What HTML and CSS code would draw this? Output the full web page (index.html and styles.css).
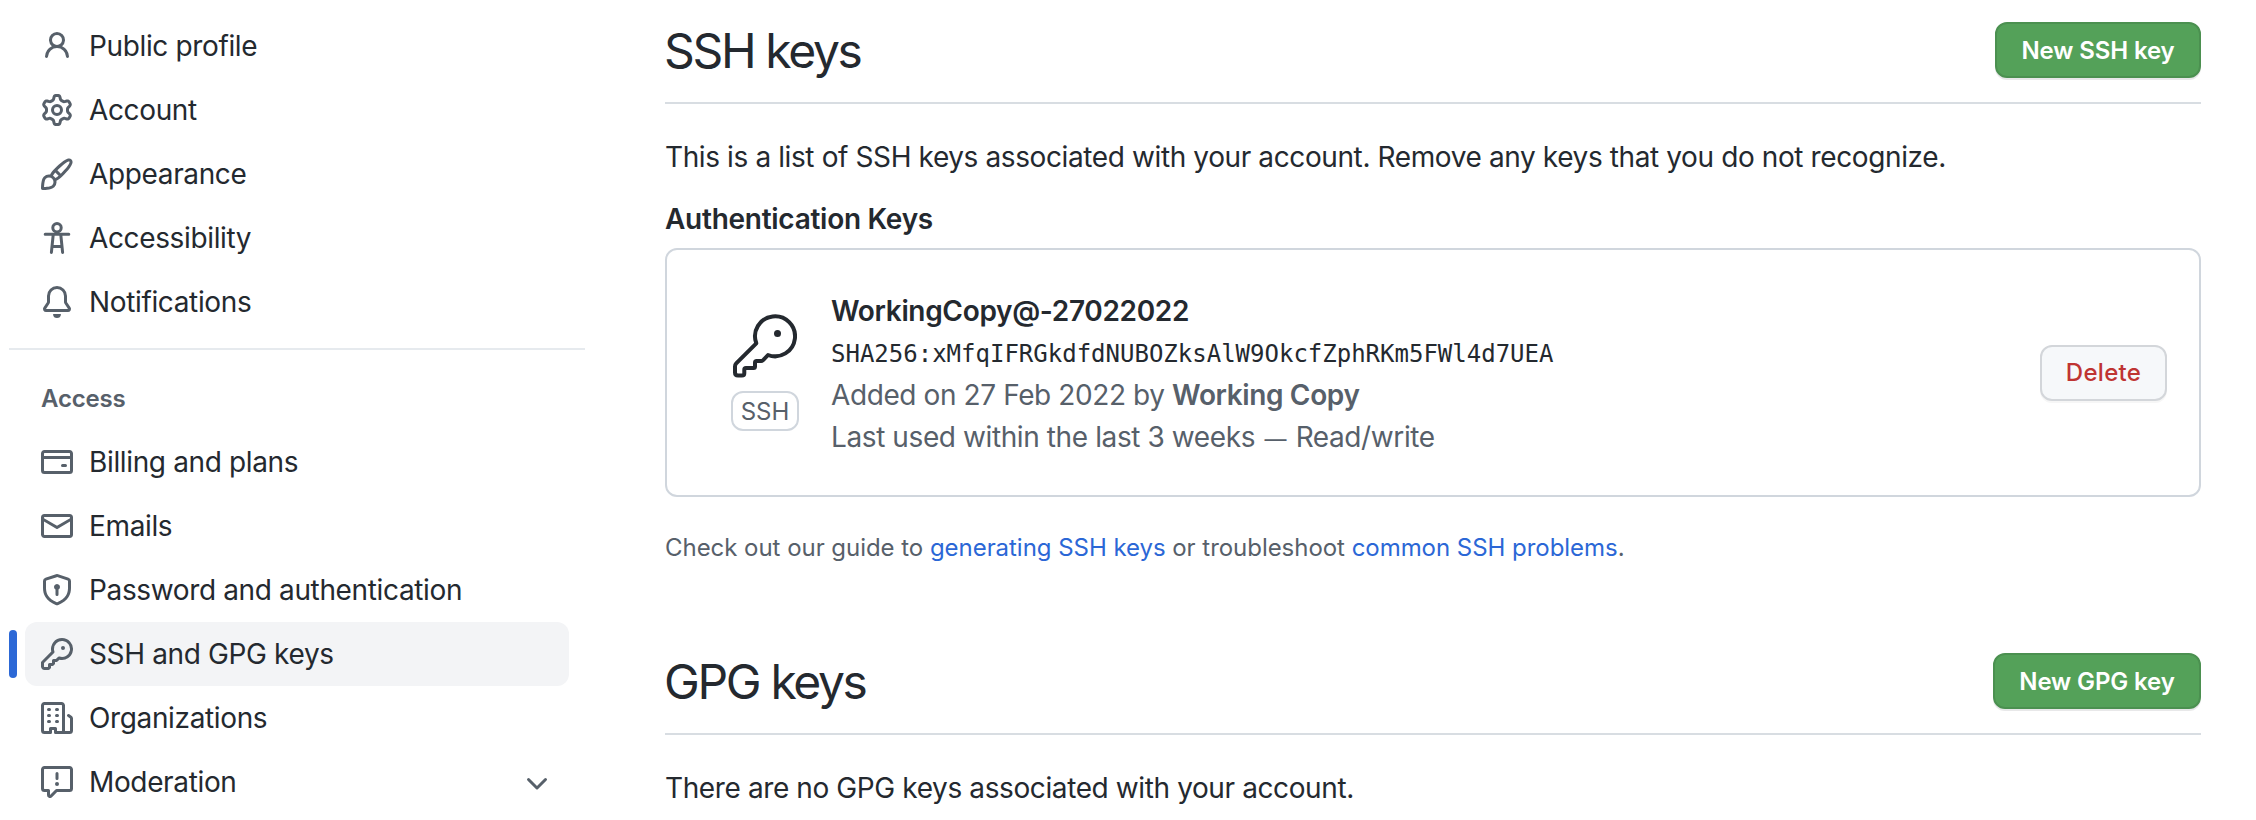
FILE: index.html
```html
<!DOCTYPE html>
<html lang="en">
<head>
<meta charset="utf-8">
<title>SSH and GPG keys</title>
<link rel="stylesheet" href="styles.css">
</head>
<body>
<div class="page">
  <nav class="sidebar">
    <ul class="nav-list">
      <li class="nav-item"><svg class="icon" viewBox="0 0 16 16"><path d="M10.5 5a2.5 2.5 0 11-5 0 2.5 2.5 0 015 0zm.061 3.073a4 4 0 10-5.123 0 6.004 6.004 0 00-3.431 5.142.75.75 0 001.498.07 4.5 4.5 0 018.99 0 .75.75 0 101.498-.07 6.005 6.005 0 00-3.432-5.142z"/></svg><span class="label">Public profile</span></li>
      <li class="nav-item"><svg class="icon" viewBox="0 0 16 16"><path fill-rule="evenodd" d="M7.429 1.525a6.593 6.593 0 011.142 0c.036.003.108.036.137.146l.289 1.105c.147.56.55.967.997 1.189.174.086.341.183.501.29.417.278.97.423 1.53.27l1.102-.303c.11-.03.175.016.195.046.219.31.41.641.573.989.014.031.022.11-.059.19l-.815.806c-.411.406-.562.957-.53 1.456a4.588 4.588 0 010 .582c-.032.499.119 1.05.53 1.456l.815.806c.08.08.073.159.059.19a6.494 6.494 0 01-.573.99c-.02.029-.086.074-.195.045l-1.103-.303c-.559-.153-1.112-.008-1.529.27-.16.107-.327.204-.5.29-.449.222-.851.628-.998 1.189l-.289 1.105c-.029.11-.101.143-.137.146a6.613 6.613 0 01-1.142 0c-.036-.003-.108-.037-.137-.146l-.289-1.105c-.147-.56-.55-.967-.997-1.189a4.502 4.502 0 01-.501-.29c-.417-.278-.97-.423-1.53-.27l-1.102.303c-.11.03-.175-.016-.195-.046a6.492 6.492 0 01-.573-.989c-.014-.031-.022-.11.059-.19l.815-.806c.411-.406.562-.957.53-1.456a4.587 4.587 0 010-.582c.032-.499-.119-1.05-.53-1.456l-.815-.806c-.08-.08-.073-.159-.059-.19a6.44 6.44 0 01.573-.99c.02-.029.086-.075.195-.045l1.103.303c.559.153 1.112.008 1.529-.27.16-.107.327-.204.5-.29.449-.222.851-.628.998-1.189l.289-1.105c.029-.11.101-.143.137-.146zM8 0c-.236 0-.47.01-.701.03-.743.065-1.29.615-1.458 1.261l-.29 1.106c-.017.066-.078.158-.211.224a5.994 5.994 0 00-.668.386c-.123.082-.233.09-.3.071L3.27 2.776c-.644-.177-1.392.02-1.82.63a7.977 7.977 0 00-.704 1.217c-.315.675-.111 1.422.363 1.891l.815.806c.05.048.098.147.088.294a6.084 6.084 0 000 .772c.01.147-.038.246-.088.294l-.815.806c-.474.469-.678 1.216-.363 1.891.2.428.436.835.704 1.218.428.609 1.176.806 1.82.63l1.103-.303c.066-.019.176-.011.299.071.213.143.436.272.668.386.133.066.194.158.212.224l.289 1.106c.169.646.715 1.196 1.458 1.26a8.094 8.094 0 001.402 0c.743-.064 1.29-.614 1.458-1.26l.29-1.106c.017-.066.078-.158.211-.224a5.98 5.98 0 00.668-.386c.123-.082.233-.09.3-.071l1.102.302c.644.177 1.392-.02 1.82-.63.268-.382.505-.789.704-1.217.315-.675.111-1.422-.364-1.891l-.814-.806c-.05-.048-.098-.147-.088-.294a6.1 6.1 0 000-.772c-.01-.147.039-.246.088-.294l.814-.806c.475-.469.679-1.216.364-1.891a7.992 7.992 0 00-.704-1.218c-.428-.609-1.176-.806-1.82-.63l-1.103.303c-.066.019-.176.011-.299-.071a5.991 5.991 0 00-.668-.386c-.133-.066-.194-.158-.212-.224L10.16 1.29C9.99.645 9.444.095 8.701.031A8.094 8.094 0 008 0zm1.5 8a1.5 1.5 0 11-3 0 1.5 1.5 0 013 0zM11 8a3 3 0 11-6 0 3 3 0 016 0z"/></svg><span class="label">Account</span></li>
      <li class="nav-item"><svg class="icon" viewBox="0 0 16 16"><path fill-rule="evenodd" d="M11.134 1.535C9.722 2.562 8.16 4.057 6.889 5.312 5.8 6.387 5.041 7.401 4.575 8.294a3.745 3.745 0 00-3.227 1.054c-.43.431-.69 1.066-.86 1.657a11.982 11.982 0 00-.358 1.914A21.263 21.263 0 000 15.203v.054l.75-.007-.007.75h.054a14.404 14.404 0 00.654-.012 21.243 21.243 0 001.63-.118c.62-.07 1.3-.18 1.914-.357.592-.17 1.226-.43 1.657-.861a3.745 3.745 0 001.055-3.217c.908-.461 1.942-1.216 3.04-2.3 1.279-1.262 2.764-2.825 3.775-4.249.501-.706.923-1.428 1.125-2.096.2-.659.235-1.469-.368-2.07-.606-.607-1.42-.55-2.069-.34-.66.213-1.376.646-2.076 1.155zm-3.95 8.48a3.76 3.76 0 00-1.19-1.192 9.758 9.758 0 011.161-1.607l1.658 1.658a9.853 9.853 0 01-1.63 1.142zM.742 16l.007-.75-.75.008A.75.75 0 00.743 16zM12.016 2.749c-1.224.89-2.605 2.189-3.822 3.384l1.718 1.718c1.21-1.205 2.51-2.597 3.387-3.833.47-.662.78-1.227.912-1.662.134-.444.032-.551.009-.575h-.001V1.78c-.014-.014-.112-.113-.548.027-.432.14-.995.462-1.655.942zM1.62 13.089a19.56 19.56 0 00-.104 1.395 19.55 19.55 0 001.396-.104 10.528 10.528 0 001.668-.309c.526-.151.856-.325 1.011-.48a2.25 2.25 0 00-3.182-3.182c-.155.155-.329.485-.48 1.01a10.515 10.515 0 00-.309 1.67z"/></svg><span class="label">Appearance</span></li>
      <li class="nav-item"><svg class="icon" viewBox="0 0 16 16"><g class="line"><circle cx="8" cy="2.85" r="2.1"/><path d="M2.1 6.1h11.8M6.1 6.4L5.2 15.2M9.9 6.4l.9 8.8M5.6 12.3h4.8"/></g></svg><span class="label">Accessibility</span></li>
      <li class="nav-item"><svg class="icon" viewBox="0 0 16 16"><path d="M8 16a2 2 0 001.985-1.75c.017-.137-.097-.25-.235-.25h-3.5c-.138 0-.252.113-.235.25A2 2 0 008 16z"/><path fill-rule="evenodd" d="M8 1.5A3.5 3.5 0 004.5 5v2.947c0 .346-.102.683-.294.97l-1.703 2.556a.018.018 0 00-.003.01l.001.006c0 .002.002.004.004.006a.017.017 0 00.006.004l.007.001h10.964l.007-.001a.016.016 0 00.006-.004.016.016 0 00.004-.006l.001-.007a.017.017 0 00-.003-.01l-1.703-2.554a1.75 1.75 0 01-.294-.97V5A3.5 3.5 0 008 1.5zM3 5a5 5 0 0110 0v2.947c0 .05.015.098.042.139l1.703 2.555A1.518 1.518 0 0113.482 13H2.518a1.518 1.518 0 01-1.263-2.36l1.703-2.554A.25.25 0 003 7.947V5z"/></svg><span class="label">Notifications</span></li>
    </ul>
    <h3 class="nav-heading">Access</h3>
    <ul class="nav-list">
      <li class="nav-item"><svg class="icon" viewBox="0 0 16 16"><path fill-rule="evenodd" d="M10.75 9a.75.75 0 000 1.5h1.5a.75.75 0 000-1.5h-1.5zM0 3.75C0 2.784.784 2 1.75 2h12.5c.966 0 1.75.784 1.75 1.75v8.5A1.75 1.75 0 0114.25 14H1.75A1.75 1.75 0 010 12.25v-8.5zm14.5 0V5h-13V3.75a.25.25 0 01.25-.25h12.5a.25.25 0 01.25.25zm0 2.75h-13v5.75c0 .138.112.25.25.25h12.5a.25.25 0 00.25-.25V6.5z"/></svg><span class="label">Billing and plans</span></li>
      <li class="nav-item"><svg class="icon" viewBox="0 0 16 16"><path fill-rule="evenodd" d="M1.75 2A1.75 1.75 0 000 3.75v.736a.75.75 0 000 .027v7.737C0 13.216.784 14 1.75 14h12.5A1.75 1.75 0 0016 12.25v-8.5A1.75 1.75 0 0014.25 2H1.75zM14.5 4.07v-.32a.25.25 0 00-.25-.25H1.75a.25.25 0 00-.25.25v.32L8 7.88l6.5-3.81zm-13 1.74v6.441c0 .138.112.25.25.25h12.5a.25.25 0 00.25-.25V5.809L8.38 9.397a.75.75 0 01-.76 0L1.5 5.809z"/></svg><span class="label">Emails</span></li>
      <li class="nav-item"><svg class="icon" viewBox="0 0 16 16"><path fill-rule="evenodd" d="M8.533.133a1.75 1.75 0 00-1.066 0l-5.25 1.68A1.75 1.75 0 001 3.48V7c0 1.566.32 3.182 1.303 4.682.983 1.498 2.585 2.813 5.032 3.855a1.7 1.7 0 001.33 0c2.447-1.042 4.049-2.357 5.032-3.855C14.68 10.182 15 8.566 15 7V3.48a1.75 1.75 0 00-1.217-1.667L8.533.133zm-.61 1.429a.25.25 0 01.153 0l5.25 1.68a.25.25 0 01.174.238V7c0 1.358-.275 2.666-1.057 3.86-.784 1.194-2.121 2.34-4.366 3.297a.2.2 0 01-.154 0c-2.245-.956-3.582-2.104-4.366-3.298C2.775 9.666 2.5 8.36 2.5 7V3.48a.25.25 0 01.174-.237l5.25-1.68zM9.5 6.5a1.5 1.5 0 01-.75 1.3v2.45a.75.75 0 01-1.5 0V7.8A1.5 1.5 0 119.5 6.5z"/></svg><span class="label">Password and authentication</span></li>
      <li class="nav-item selected"><svg class="icon" viewBox="0 0 16 16"><path fill-rule="evenodd" d="M6.5 5.5a4 4 0 112.731 3.795.75.75 0 00-.768.18L7.44 10.5H6.25a.75.75 0 00-.75.75v1.19l-.06.06H4.25a.75.75 0 00-.75.75v1.19l-.06.06H1.75a.25.25 0 01-.25-.25v-1.69l5.024-5.023a.75.75 0 00.181-.768A3.995 3.995 0 016.5 5.5zm4-5.5a5.5 5.5 0 00-5.348 6.788L.22 11.72a.75.75 0 00-.22.53v2C0 15.216.784 16 1.75 16h2a.75.75 0 00.53-.22l.5-.5a.75.75 0 00.22-.53V14h.75a.75.75 0 00.53-.22l.5-.5a.75.75 0 00.22-.53V12h.75a.75.75 0 00.53-.22l.932-.932A5.5 5.5 0 1010.5 0zm.5 6a1 1 0 100-2 1 1 0 000 2z"/></svg><span class="label">SSH and GPG keys</span></li>
      <li class="nav-item"><svg class="icon" viewBox="0 0 16 16"><path fill-rule="evenodd" d="M1.5 14.25c0 .138.112.25.25.25H4v-1.25a.75.75 0 01.75-.75h2.5a.75.75 0 01.75.75v1.25h2.25a.25.25 0 00.25-.25V1.75a.25.25 0 00-.25-.25h-8.5a.25.25 0 00-.25.25v12.5zM1.75 16A1.75 1.75 0 010 14.25V1.75C0 .784.784 0 1.75 0h8.5C11.216 0 12 .784 12 1.75v12.5c0 .085-.006.168-.018.25h2.268a.25.25 0 00.25-.25V8.285a.25.25 0 00-.111-.208l-1.055-.703a.75.75 0 11.832-1.248l1.055.703c.487.325.779.871.779 1.456v5.965A1.75 1.75 0 0114.25 16h-3.5a.75.75 0 01-.197-.026c-.099.017-.2.026-.303.026h-3a.75.75 0 01-.75-.75V14h-1v1.25a.75.75 0 01-.75.75h-3zM3 3.75A.75.75 0 013.75 3h.5a.75.75 0 010 1.5h-.5A.75.75 0 013 3.75zM3.75 6a.75.75 0 000 1.5h.5a.75.75 0 000-1.5h-.5zM3 9.75A.75.75 0 013.75 9h.5a.75.75 0 010 1.5h-.5A.75.75 0 013 9.75zM7.75 9a.75.75 0 000 1.5h.5a.75.75 0 000-1.5h-.5zM7 6.75A.75.75 0 017.75 6h.5a.75.75 0 010 1.5h-.5A.75.75 0 017 6.75zM7.75 3a.75.75 0 000 1.5h.5a.75.75 0 000-1.5h-.5z"/></svg><span class="label">Organizations</span></li>
      <li class="nav-item"><svg class="icon" viewBox="0 0 16 16"><path fill-rule="evenodd" d="M0 1.75C0 .784.784 0 1.75 0h12.5C15.216 0 16 .784 16 1.75v9.5A1.75 1.75 0 0114.25 13H8.06l-2.573 2.573A1.457 1.457 0 013 14.543V13H1.75A1.75 1.75 0 010 11.25v-9.5zm1.75-.25a.25.25 0 00-.25.25v9.5c0 .138.112.25.25.25h2a.75.75 0 01.75.75v2.19l2.72-2.72a.75.75 0 01.53-.22h6.5a.25.25 0 00.25-.25v-9.5a.25.25 0 00-.25-.25H1.75zM9 9a1 1 0 11-2 0 1 1 0 012 0zm-.25-5.25a.75.75 0 00-1.5 0v2.5a.75.75 0 001.5 0v-2.5z"/></svg><span class="label">Moderation</span><svg class="icon" viewBox="0 0 16 16"><path fill-rule="evenodd" d="M12.78 6.22a.75.75 0 010 1.06l-4.25 4.25a.75.75 0 01-1.06 0L3.22 7.28a.75.75 0 011.06-1.06L8 9.94l3.72-3.72a.75.75 0 011.06 0z"/></svg></li>
    </ul>
  </nav>
  <main class="content">
    <header class="section-head">
      <h2 class="title">SSH keys</h2>
      <button class="btn btn-primary btn-ssh">New SSH key</button>
    </header>
    <p class="intro">This is a list of SSH keys associated with your account. Remove any keys that you do not recognize.</p>
    <h3 class="subhead">Authentication Keys</h3>
    <div class="key-box">
      <div class="key-type">
        <svg class="key-icon" viewBox="0 0 64 64"><path class="key-outline" d="M23.3 29.3L3.2 49.4Q2 50.6 2 52.5V58.5Q2 61.5 5 61.5H9Q11.3 61.5 11.3 59.2V55.7Q11.3 54 13 54H20.5Q22 54 22 52.5V48.7Q22 47 23.7 47H28.2Q29.4 47 30.3 46L35 41A20 20 0 1 0 23.3 29.3z"/><circle cx="44.5" cy="19.5" r="3.5"/></svg>
        <span class="badge">SSH</span>
      </div>
      <div class="key-info">
        <strong class="key-name">WorkingCopy@-27022022</strong>
        <code class="fingerprint">SHA256:xMfqIFRGkdfdNUBOZksAlW9OkcfZphRKm5FWl4d7UEA</code>
        <span class="meta">Added on 27 Feb 2022 by <strong class="app">Working Copy</strong></span>
        <span class="meta">Last used within the last 3 weeks <span class="dash">—</span> Read/write</span>
      </div>
      <button class="btn btn-danger">Delete</button>
    </div>
    <p class="help">Check out our guide to <a class="link">generating SSH keys</a> or troubleshoot <a class="link">common SSH problems</a>.</p>
    <header class="section-head section-gpg">
      <h2 class="title">GPG keys</h2>
      <button class="btn btn-primary btn-gpg">New GPG key</button>
    </header>
    <p class="intro">There are no GPG keys associated with your account.</p>
  </main>
</div>
</body>
</html>
```
FILE: styles.css
```css
* { box-sizing: border-box; }
body {
  margin: 0;
  background: #fff;
  color: #24292f;
  font: 28px/42px Inter, "Liberation Sans", sans-serif;
  letter-spacing: -0.39px;
}
h2, h3, p, ul { margin: 0; padding: 0; }
.page { display: flex; height: 820px; overflow: hidden; }

.sidebar { width: 576px; margin-left: 9px; padding-top: 14px; flex: none; }
.nav-list { list-style: none; padding: 0 16px; }
.nav-item {
  position: relative;
  display: flex;
  align-items: center;
  gap: 16px;
  height: 64px;
  padding: 0 16px;
  border-radius: 12px;
  letter-spacing: -0.36px;
}
.label { flex: 1; }
.selected { background: #f3f4f6; }
.selected::before {
  content: "";
  position: absolute;
  left: -16px;
  top: 8px;
  width: 8px;
  height: 48px;
  border-radius: 4px;
  background: #2c68d6;
}
.icon { width: 32px; height: 32px; fill: #57606a; flex: none; }
.line { fill: none; stroke: #57606a; stroke-width: 1.5; stroke-linecap: round; }
.nav-heading {
  margin-top: 14px;
  padding: 31px 32px 13px;
  border-top: 2px solid #e6eaee;
  color: #57606a;
  font-size: 24px;
  font-weight: 600;
  line-height: 36px;
  letter-spacing: -0.2px;
}

.content { width: 1536px; margin-left: 80px; padding-top: 22px; flex: none; }
.section-head {
  display: flex;
  align-items: flex-start;
  justify-content: space-between;
  height: 82px;
  border-bottom: 2px solid #d8dde2;
}
.section-gpg { margin-top: 87px; }
.title { font-size: 48px; font-weight: 400; line-height: 57px; letter-spacing: -2.35px; margin-left: -1px; }
.btn {
  height: 56px;
  padding: 1px 0 0;
  border: 2px solid;
  border-radius: 12px;
  font: 600 24px/36px Inter, "Liberation Sans", sans-serif;
  letter-spacing: -0.12px;
}
.btn-primary {
  background: #54a159;
  border-color: #4b9050;
  color: #fff;
  box-shadow: 0 2px 0 rgba(27, 31, 36, .1);
}
.btn-ssh { width: 206px; }
.btn-gpg { width: 208px; }
.btn-danger {
  width: 127px;
  margin-left: auto;
  background: #f6f8fa;
  border-color: #d3d6da;
  color: #bf3432;
  font-weight: 500;
  letter-spacing: 0.3px;
  box-shadow: 0 2px 0 rgba(27, 31, 36, .04);
}
.intro { margin-top: 32px; }
.subhead { margin: 20px 0 8px; font-size: 28px; font-weight: 600; letter-spacing: -0.27px; }
.key-box {
  display: flex;
  align-items: center;
  height: 249px;
  padding: 0 32px 0 64px;
  border: 2px solid #d0d6dd;
  border-radius: 12px;
}
.key-type { display: flex; flex-direction: column; align-items: center; gap: 13px; width: 68px; }
.key-icon { width: 64px; height: 64px; fill: #24292f; }
.key-outline { fill: none; stroke: #24292f; stroke-width: 4; stroke-linejoin: round; }
.badge {
  width: 68px;
  height: 40px;
  border: 2px solid #d0d6dd;
  border-radius: 12px;
  color: #57606a;
  font-size: 24px;
  line-height: 37px;
  letter-spacing: 0;
  text-align: center;
}
.key-info { display: flex; flex-direction: column; margin-left: 32px; padding-top: 5px; }
.key-name { font-weight: 600; letter-spacing: -0.33px; }
.fingerprint {
  padding-top: 3px;
  font: 24px/38.5px "DejaVu Sans Mono", monospace;
  letter-spacing: 0;
}
.meta { color: #57606a; letter-spacing: -0.4px; }
.app { font-weight: 600; letter-spacing: -0.37px; }
.dash { font-size: 22px; margin: 0 2px; }
.help { margin-top: 33px; color: #57606a; font-size: 24px; line-height: 36px; letter-spacing: -0.04px; }
.link { color: #2b67d6; }
```
